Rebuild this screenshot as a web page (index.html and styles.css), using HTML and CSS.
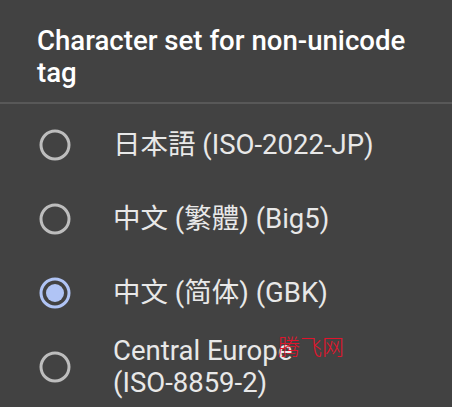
FILE: index.html
```html
<!DOCTYPE html>
<html lang="en">
<head>
<meta charset="utf-8">
<title>Character set</title>
<link rel="stylesheet" href="styles.css">
</head>
<body>
<div class="dialog">
  <div class="title">Character set for non-unicode tag</div>
  <div class="divider"></div>
  <div class="list">
    <div class="row">
      <span class="radio"><svg viewBox="0 0 32 32" width="32" height="32"><circle cx="16" cy="16" r="14" fill="none" stroke="#bdbdbd" stroke-width="3"/></svg></span>
      <span class="label" lang="ja">日本語 (ISO-2022-JP)</span>
    </div>
    <div class="row">
      <span class="radio"><svg viewBox="0 0 32 32" width="32" height="32"><circle cx="16" cy="16" r="14" fill="none" stroke="#bdbdbd" stroke-width="3"/></svg></span>
      <span class="label" lang="zh-TW">中文 (繁體) (Big5)</span>
    </div>
    <div class="row">
      <span class="radio"><svg viewBox="0 0 32 32" width="32" height="32"><circle cx="16" cy="16" r="14" fill="none" stroke="#b0c4f5" stroke-width="3"/><circle cx="16" cy="16" r="9" fill="#b0c4f5"/></svg></span>
      <span class="label" lang="zh-CN">中文 (简体) (GBK)</span>
    </div>
    <div class="row">
      <span class="radio"><svg viewBox="0 0 32 32" width="32" height="32"><circle cx="16" cy="16" r="14" fill="none" stroke="#bdbdbd" stroke-width="3"/></svg></span>
      <span class="label"><span class="nw">Central Europe</span> <span class="nw">(ISO-8859-2)</span></span>
    </div>
  </div>
  <div class="watermark" lang="zh-CN">腾飞网</div>
</div>
</body>
</html>
```
FILE: styles.css
```css
html, body {
  margin: 0;
  padding: 0;
  background: #424242;
}
.dialog {
  position: relative;
  width: 452px;
  height: 407px;
  overflow: hidden;
  background: #424242;
  font-family: Roboto, "Noto Sans CJK SC", sans-serif;
}
.title {
  padding: 25px 20px 13px 37px;
  font-size: 27.6px;
  line-height: 32px;
  font-weight: 500;
  color: #ffffff;
}
.divider {
  height: 2px;
  background: #585858;
}
.list {
  padding-top: 4px;
}
.row {
  display: flex;
  align-items: center;
  height: 74px;
  padding-left: 39px;
}
.radio {
  display: flex;
  width: 32px;
  height: 32px;
  flex: none;
}
.label {
  margin-left: 42px;
  font-size: 27.5px;
  line-height: 32px;
  color: #e8e8e8;
  width: 300px;
}
.nw {
  white-space: nowrap;
}
.label:lang(ja) { font-family: Roboto, "Noto Sans CJK JP", sans-serif; }
.label:lang(zh-TW) { font-family: Roboto, "Noto Sans CJK TC", sans-serif; }
.label:lang(zh-CN) { font-family: Roboto, "Noto Sans CJK SC", sans-serif; }
.watermark {
  position: absolute;
  left: 278px;
  top: 332px;
  font-family: "Noto Sans CJK SC", sans-serif;
  font-weight: 300;
  font-size: 22px;
  line-height: 26px;
  color: #e2142c;
}
```
